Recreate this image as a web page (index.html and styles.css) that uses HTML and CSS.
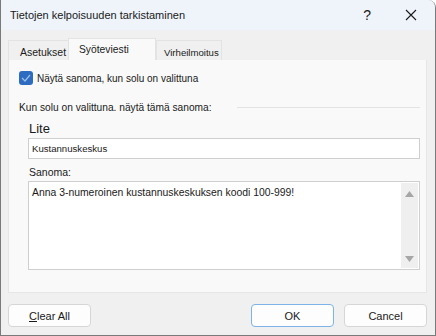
FILE: index.html
```html
<!DOCTYPE html>
<html>
<head>
<meta charset="utf-8">
<link rel="stylesheet" href="styles.css">
</head>
<body>
<div class="window">
  <div class="titlebar">
    <span class="title">Tietojen kelpoisuuden tarkistaminen</span>
    <span class="help">?</span>
    <svg class="close" width="12" height="12" viewBox="0 0 12 12"><path d="M1 1 L11 11 M11 1 L1 11" stroke="#1a1a1a" stroke-width="1.1" fill="none"/></svg>
  </div>
  <div class="body">
    <div class="tabs">
      <div class="tab first">Asetukset</div>
      <div class="tab active">Syöteviesti</div>
      <div class="tab last">Virheilmoitus</div>
    </div>
    <div class="panel">
      <label class="check">
        <span class="box"><svg width="10" height="8" viewBox="0 0 10 8"><path d="M1 4 L4 7 L9 1" stroke="#9ec0ea" stroke-width="1.2" fill="none"/></svg></span>
        <span>Näytä sanoma, kun solu on valittuna</span>
      </label>
      <div class="section">
        <span class="sec-label">Kun solu on valittuna. näytä tämä sanoma:</span>
        <span class="sec-line"></span>
      </div>
      <div class="field-label big">Lite</div>
      <div class="input">Kustannuskeskus</div>
      <div class="field-label small">Sanoma:</div>
      <div class="textarea">
        <div class="ta-text">Anna 3-numeroinen kustannuskeskuksen koodi 100-999!</div>
        <div class="scroll">
          <svg width="9" height="6" viewBox="0 0 9 6"><path d="M0 6 L4.5 0 L9 6 Z" fill="#a6a6a6"/></svg>
          <svg width="9" height="6" viewBox="0 0 9 6"><path d="M0 0 L4.5 6 L9 0 Z" fill="#a6a6a6"/></svg>
        </div>
      </div>
    </div>
    <div class="buttons">
      <button class="btn"><u>C</u>lear All</button>
      <span class="spacer"></span>
      <button class="btn ok">OK</button>
      <button class="btn">Cancel</button>
    </div>
  </div>
</div>
</body>
</html>
```
FILE: styles.css
```css
html, body { margin: 0; padding: 0; }
body { width: 436px; height: 336px; overflow: hidden; font-family: "Liberation Sans", Arial, sans-serif; color: #1a1a1a; }
.window {
  width: 436px; height: 336px; box-sizing: border-box;
  border: 1px solid #7a7a7a; border-top: none;
  border-top-right-radius: 8px;
  background: #f0f0f0; display: flex; flex-direction: column; overflow: hidden;
}
.titlebar {
  height: 30px; background: #eef4fa; display: flex; align-items: center;
  padding-left: 9px; flex-shrink: 0;
}
.title { font-size: 11px; flex: 1; }
.help { font-size: 14px; margin-right: 34px; }
.close { margin-right: 18px; }
.body { flex: 1; display: flex; flex-direction: column; padding: 8px 8px 0 7px; }
.tabs { display: flex; align-items: flex-end; height: 22px; }
.tab {
  height: 20px; box-sizing: border-box; font-size: 10.3px;
  border: 1px solid #e3e3e3; border-bottom: none; background: #f0f0f0;
  color: #1a1a1a;
}
.tab.first { font-size: 10.5px; padding: 5px 0 0 11px; border-right: none; width: 60px; }
.tab.active { height: 22px; background: #f9f9f9; width: 88px; padding: 5px 0 0 10px; }
.tab.last { width: 66px; padding: 6px 0 0 7px; font-size: 9.6px; }
.panel {
  height: 233px; box-sizing: border-box; background: #f9f9f9;
  border: 1px solid #e6e6e6; border-top: none; padding: 10px 8px 0 10px;
  display: flex; flex-direction: column;
}
.check { display: flex; align-items: center; font-size: 10px; height: 14px; margin-top: 1px; }
.box {
  width: 14px; height: 14px; border-radius: 3px; background: #2d6cc0; box-sizing: border-box;
  display: flex; align-items: center; justify-content: center; margin-right: 4px;
}
.section { display: flex; align-items: center; margin-top: 15px; font-size: 10.2px; height: 14px; }
.sec-line { flex: 1; height: 1px; background: #e3e3e3; margin-left: 25px; margin-right: -2px; }
.field-label { font-size: 10.5px; margin-left: 10px; color: #1a1a1a; }
.field-label.big { font-size: 13px; margin-top: 7px; }
.field-label.small { margin-top: 7px; }
.input {
  margin: 2px -2px 0 9px; height: 21px; box-sizing: border-box; background: #fff;
  border: 1px solid #cfcfcf; font-size: 9.6px; padding: 4px 3px;
}
.textarea {
  margin: 3px -2px 0 9px; height: 89px; box-sizing: border-box; background: #fff;
  border: 1px solid #cfcfcf; display: flex; padding: 1px;
}
.ta-text { flex: 1; font-size: 10.4px; padding: 4px 2px; }
.scroll {
  width: 17px; background: #efefef; display: flex; flex-direction: column;
  justify-content: space-between; align-items: center; padding: 8px 0 6px;
}
.buttons { display: flex; margin-top: 11px; gap: 10px; }
.spacer { flex: 1; }
.btn {
  width: 83px; height: 23px; box-sizing: border-box; background: #fdfdfd;
  border: 1px solid #d6d6d6; border-radius: 4px; font-family: inherit; font-size: 11px; color: #1a1a1a;
  padding: 0;
}
.btn u { text-decoration: underline; }
.btn.ok { border: 1.5px solid #7db3e6; }
```
